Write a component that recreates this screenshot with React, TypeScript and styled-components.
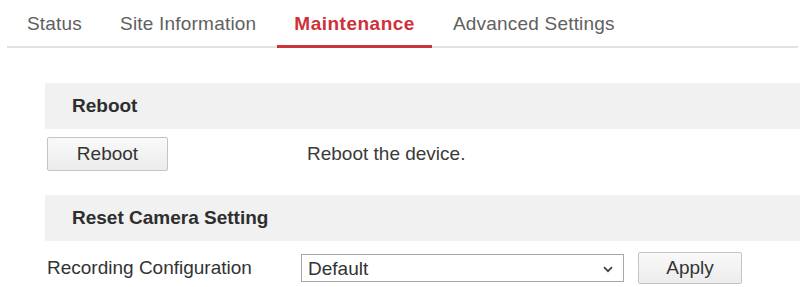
import React, { useState } from "react"
import styled, { createGlobalStyle } from "styled-components"

const GlobalStyle = createGlobalStyle`
  body {
    margin: 0;
    background: #fff;
    font-family: "Liberation Sans", Arial, sans-serif;
    color: #333;
  }
`

const Page = styled.div`
  width: 803px;
  font-size: 19px;
`

const TabBar = styled.div`
  display: flex;
  gap: 4px;
  margin: 0 5px 0 7px;
  padding-left: 3px;
  border-bottom: 2px solid #e2e2e2;
`

const Tab = styled.div<{ $active: boolean }>`
  padding: 13px 17px 10px;
  line-height: 22px;
  margin-bottom: -2px;
  border-bottom: 3px solid ${(p) => (p.$active ? "#c9343d" : "transparent")};
  color: ${(p) => (p.$active ? "#cf3039" : "#606060")};
  font-weight: ${(p) => (p.$active ? "bold" : "normal")};
  letter-spacing: ${(p) => (p.$active ? "0.5px" : "0.2px")};
  cursor: pointer;
`

const Content = styled.div`
  margin-top: 35px;
`

const SectionHeader = styled.div<{ $gap: number }>`
  margin: ${(p) => p.$gap}px 3px 0 45px;
  height: 46px;
  line-height: 46px;
  padding-left: 27px;
  background: #f1f1f1;
  font-weight: bold;
  color: #2e2e2e;
`

const Row = styled.div<{ $gap: number; $height: number }>`
  display: flex;
  align-items: center;
  margin: ${(p) => p.$gap}px 0 0 47px;
  height: ${(p) => p.$height}px;
`

const LabelCell = styled.div`
  width: 254px;
  flex-shrink: 0;
  color: #333;
`

const Description = styled.div`
  padding-left: 6px;
  color: #3a3a3a;
`

const Button = styled.button<{ $w: number; $h: number }>`
  width: ${(p) => p.$w}px;
  height: ${(p) => p.$h}px;
  border: 1px solid #c4c4c4;
  border-radius: 2px;
  background: linear-gradient(#f9f9f9, #ececec);
  font-family: inherit;
  font-size: 19px;
  color: #333;
  padding: 0;
  cursor: pointer;
`

const SelectBox = styled.div`
  display: flex;
  align-items: center;
  width: 323px;
  height: 28px;
  box-sizing: border-box;
  border: 1px solid #a8a8a8;
  background: #fff;
  padding: 0 10px 0 0;
`

const NativeSelect = styled.select`
  flex: 1;
  appearance: none;
  border: none;
  outline: none;
  background: transparent;
  font-family: inherit;
  font-size: 19px;
  color: #333;
  padding: 0 0 0 6px;
  height: 26px;
`

const Chevron = styled.svg`
  margin-top: 3px;
`

const ApplyButton = styled(Button)`
  margin-left: 14px;
`

export default function App() {
  const [tab, setTab] = useState("Maintenance")
  const tabs = ["Status", "Site Information", "Maintenance", "Advanced Settings"]

  return (
    <Page>
      <GlobalStyle />
      <TabBar>
        {tabs.map((t) => (
          <Tab key={t} $active={t === tab} onClick={() => setTab(t)}>
            {t}
          </Tab>
        ))}
      </TabBar>

      <Content>
        <SectionHeader $gap={0}>Reboot</SectionHeader>
        <Row $gap={8} $height={34}>
          <LabelCell>
            <Button $w={121} $h={34}>Reboot</Button>
          </LabelCell>
          <Description>Reboot the device.</Description>
        </Row>

        <SectionHeader $gap={24}>Reset Camera Setting</SectionHeader>
        <Row $gap={11} $height={32}>
          <LabelCell>Recording Configuration</LabelCell>
          <SelectBox>
            <NativeSelect defaultValue="Default">
              <option>Default</option>
            </NativeSelect>
            <Chevron width="10" height="7" viewBox="0 0 10 7">
              <path d="M1 1.2l4 4 4-4" fill="none" stroke="#444" strokeWidth="1.8" />
            </Chevron>
          </SelectBox>
          <ApplyButton $w={104} $h={32}>Apply</ApplyButton>
        </Row>
      </Content>
    </Page>
  )
}
